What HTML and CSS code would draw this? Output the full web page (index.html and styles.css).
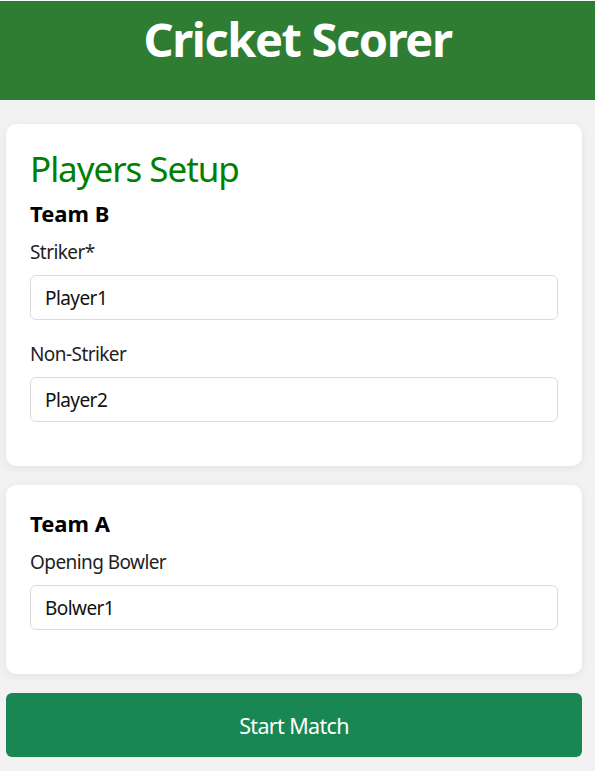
FILE: index.html
```html
<!DOCTYPE html>
<html lang="en">
<head>
<meta charset="utf-8">
<title>Cricket Scorer</title>
<link rel="stylesheet" href="styles.css">
</head>
<body>
<header class="app-header">
  <h1 class="app-title">Cricket Scorer</h1>
</header>
<main class="content">
  <section class="card">
    <h2 class="card-title">Players Setup</h2>
    <h3 class="team-title">Team B</h3>
    <div class="field">
      <label class="field-label" for="striker">Striker*</label>
      <input class="field-input" id="striker" type="text" value="Player1">
    </div>
    <div class="field">
      <label class="field-label" for="nonstriker">Non-Striker</label>
      <input class="field-input" id="nonstriker" type="text" value="Player2">
    </div>
  </section>
  <section class="card">
    <h3 class="team-title team-first">Team A</h3>
    <div class="field">
      <label class="field-label" for="bowler">Opening Bowler</label>
      <input class="field-input" id="bowler" type="text" value="Bolwer1">
    </div>
  </section>
  <button class="start-btn" type="button">Start Match</button>
</main>
</body>
</html>
```
FILE: styles.css
```css
html {
  background: #ffffff;
}
body {
  margin: 0;
  border-top: 1px solid #ffffff;
  background: #f2f2f2;
  font-family: "Noto Sans", "Open Sans", sans-serif;
  color: #222222;
  min-height: 770px;
}
.app-header {
  background: #2e7d32;
  height: 99px;
  box-sizing: border-box;
  padding-top: 10px;
  text-align: center;
}
.app-title {
  margin: 0;
  color: #ffffff;
  font-size: 47px;
  font-weight: 700;
  line-height: 56px;
  letter-spacing: -0.03em;
}
.content {
  display: flex;
  flex-direction: column;
  gap: 19px;
  padding: 24px 13px 14px 6px;
}
.card {
  background: #ffffff;
  border-radius: 10px;
  box-shadow: 0 2px 8px rgba(0, 0, 0, 0.07);
  padding: 24px 24px 22px;
}
.card-title {
  margin: 0 0 9px;
  color: #008000;
  font-size: 35px;
  font-weight: 400;
  line-height: 42px;
  letter-spacing: -0.03em;
}
.team-title {
  margin: 2px 0 13px;
  color: #000000;
  font-size: 22px;
  font-weight: 700;
  line-height: 28px;
}
.team-first {
  margin-top: 0;
}
.field {
  display: flex;
  flex-direction: column;
  gap: 11px;
  margin-bottom: 22px;
}
.field-label {
  font-size: 19px;
  line-height: 24px;
  color: #222222;
  letter-spacing: -0.03em;
}
.field-input {
  height: 45px;
  box-sizing: border-box;
  border: 1px solid #dcdce0;
  border-radius: 6px;
  padding: 0 14px;
  font-family: inherit;
  font-size: 19px;
  letter-spacing: -0.03em;
  color: #111111;
  background: #ffffff;
}
.start-btn {
  height: 64px;
  border: none;
  border-radius: 6px;
  background: #198754;
  color: #ffffff;
  font-family: inherit;
  font-size: 21.5px;
  letter-spacing: -0.03em;
}
```
